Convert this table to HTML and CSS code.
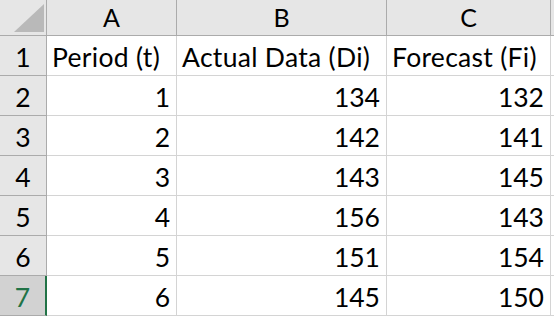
FILE: index.html
```html
<!DOCTYPE html>
<html>
<head>
<meta charset="utf-8">
<link rel="stylesheet" href="styles.css">
</head>
<body>
<div class="sheet">
  <div class="corner"><svg width="30" height="28" viewBox="0 0 30 28"><polygon points="30,0 30,28 0,28" fill="#b9b9b9"/></svg></div>
  <div class="colhead">A</div>
  <div class="colhead">B</div>
  <div class="colhead">C</div>
  <div class="colhead last"></div>

  <div class="rowhead">1</div>
  <div class="cell">Period (t)</div>
  <div class="cell">Actual Data (Di)</div>
  <div class="cell">Forecast (Fi)</div>
  <div class="cell"></div>

  <div class="rowhead">2</div>
  <div class="cell num">1</div>
  <div class="cell num">134</div>
  <div class="cell num">132</div>
  <div class="cell"></div>

  <div class="rowhead">3</div>
  <div class="cell num">2</div>
  <div class="cell num">142</div>
  <div class="cell num">141</div>
  <div class="cell"></div>

  <div class="rowhead">4</div>
  <div class="cell num">3</div>
  <div class="cell num">143</div>
  <div class="cell num">145</div>
  <div class="cell"></div>

  <div class="rowhead">5</div>
  <div class="cell num">4</div>
  <div class="cell num">156</div>
  <div class="cell num">143</div>
  <div class="cell"></div>

  <div class="rowhead">6</div>
  <div class="cell num">5</div>
  <div class="cell num">151</div>
  <div class="cell num">154</div>
  <div class="cell"></div>

  <div class="rowhead selected">7</div>
  <div class="cell num">6</div>
  <div class="cell num">145</div>
  <div class="cell num">150</div>
  <div class="cell"></div>
</div>
</body>
</html>
```

FILE: styles.css
```css
html, body {
  margin: 0;
  padding: 0;
  background: #ffffff;
}
body {
  font-family: "Lato", "Open Sans", sans-serif;
  font-size: 26.5px;
  color: #000;
  overflow: hidden;
}
.sheet {
  display: grid;
  grid-template-columns: 47px 130px 210px 164px 20px;
  grid-template-rows: 36px repeat(7, 40px);
  width: 571px;
}
.corner {
  background: #e6e6e6;
  border-right: 1px solid #ababab;
  border-bottom: 1px solid #ababab;
  display: flex;
  align-items: flex-end;
  justify-content: flex-end;
  padding: 0 2px 3px 0;
}
.colhead {
  background: #e6e6e6;
  border-right: 1px solid #ababab;
  border-bottom: 1px solid #ababab;
  display: flex;
  align-items: flex-end;
  justify-content: center;
  padding-bottom: 5px;
  font-size: 25px;
  line-height: 1;
}
.rowhead {
  background: #e6e6e6;
  border-right: 1px solid #ababab;
  border-bottom: 1px solid #ababab;
  display: flex;
  align-items: flex-end;
  justify-content: center;
  padding-bottom: 5px;
  line-height: 1;
}
.rowhead.selected {
  background: #d2d2d2;
  color: #217346;
  border-right: 2px solid #217346;
}
.cell {
  border-right: 1px solid #d4d4d4;
  border-bottom: 1px solid #d4d4d4;
  display: flex;
  align-items: flex-end;
  padding: 0 6px 5px 5px;
  line-height: 1;
  white-space: nowrap;
  letter-spacing: 0.3px;
}
.cell.num {
  justify-content: flex-end;
  letter-spacing: 0;
}
```
